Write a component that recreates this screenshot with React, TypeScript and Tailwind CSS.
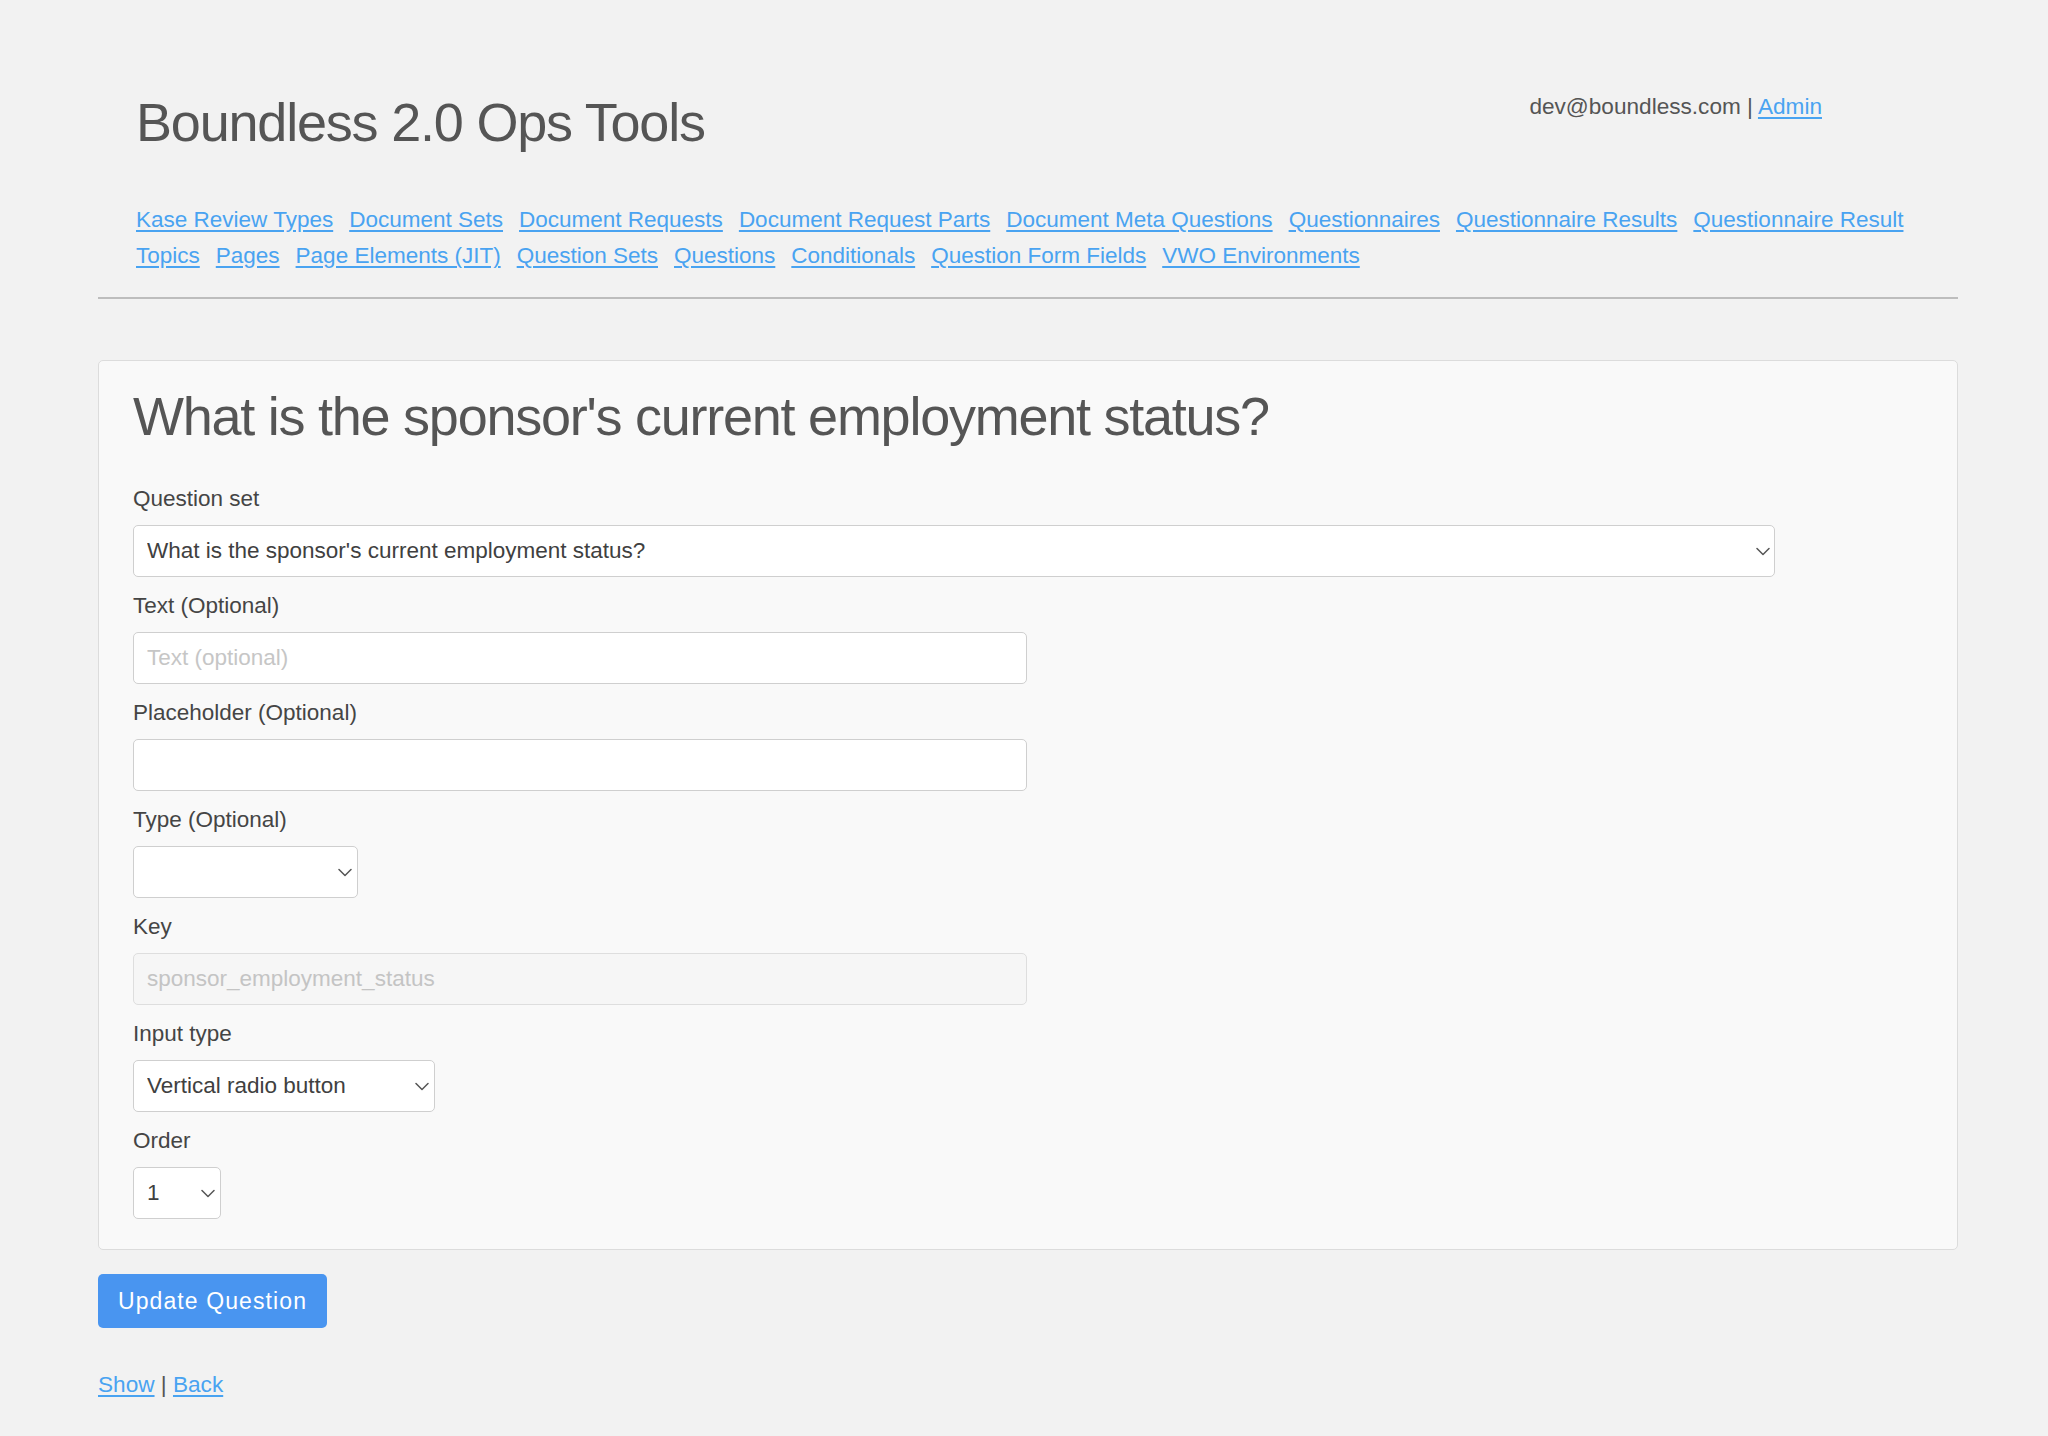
import React from "react";

const navLinks = [
  "Kase Review Types",
  "Document Sets",
  "Document Requests",
  "Document Request Parts",
  "Document Meta Questions",
  "Questionnaires",
  "Questionnaire Results",
  "Questionnaire Result Topics",
  "Pages",
  "Page Elements (JIT)",
  "Question Sets",
  "Questions",
  "Conditionals",
  "Question Form Fields",
  "VWO Environments",
];

function Chevron({ className }: { className?: string }) {
  return (
    <svg
      className={className}
      width="14"
      height="9"
      viewBox="0 0 14 9"
      fill="none"
      stroke="#555"
      strokeWidth="1.5"
      strokeLinecap="round"
      strokeLinejoin="round"
    >
      <path d="M1 1.5 L7 7.5 L13 1.5" />
    </svg>
  );
}

function Label({ children }: { children: React.ReactNode }) {
  return <div className="text-[22.5px] leading-[32px] text-[#454545] mb-[10px]">{children}</div>;
}

function SelectBox({ value, width, chevronRight }: { value: string; width: string; chevronRight: string }) {
  return (
    <div className={`relative h-[52px] ${width} mb-[13px]`}>
      <select
        defaultValue={value}
        className="appearance-none w-full h-full bg-white border border-[#cfcfcf] rounded-[5px] pl-[13px] pr-[30px] text-[22.5px] text-[#404040] outline-none"
        style={{ fontFamily: '"Liberation Sans", Arial, sans-serif' }}
      >
        <option value={value}>{value}</option>
      </select>
      <Chevron className={`absolute top-[22px] ${chevronRight} pointer-events-none`} />
    </div>
  );
}

function TextInput({ placeholder, value, disabled }: { placeholder?: string; value?: string; disabled?: boolean }) {
  return (
    <input
      type="text"
      placeholder={placeholder}
      defaultValue={value}
      disabled={disabled}
      className={`block w-[894px] h-[52px] mb-[13px] rounded-[5px] px-[13px] text-[22.5px] outline-none placeholder:text-[#c6c6c6] ${
        disabled
          ? "bg-[#f6f6f6] border border-[#dedede] text-[#c4c4c4]"
          : "bg-white border border-[#cfcfcf] text-[#404040]"
      }`}
      style={{ fontFamily: '"Liberation Sans", Arial, sans-serif' }}
    />
  );
}

export default function App() {
  return (
    <div
      className="min-h-[1436px] bg-[#f2f2f2] text-[#555] pl-[98px] pr-[90px] pt-[92px] pb-[40px]"
      style={{ fontFamily: '"Liberation Sans", Arial, Helvetica, sans-serif' }}
    >
      {/* Header */}
      <header className="border-b-2 border-[#bdbdbd] px-[38px] pb-[23px]">
        <div className="flex justify-between items-start">
          <h1 className="text-[54px] leading-[60px] tracking-[-1.2px] text-[#555] font-normal">
            Boundless 2.0 Ops Tools
          </h1>
          <div className="text-[22.6px] leading-[30px] text-[#555] mr-[98px]">
            dev@boundless.com |{" "}
            <a href="#" className="text-[#49a3f1] underline underline-offset-[3px]">
              Admin
            </a>
          </div>
        </div>
        <nav className="mt-[50px] text-[22.5px] leading-[36px]">
          {navLinks.map((l) => (
            <a key={l} href="#" className="text-[#49a3f1] underline underline-offset-[3px] mr-[16px]">
              {l}
            </a>
          ))}
        </nav>
      </header>

      {/* Edit form */}
      <section className="mt-[61px] bg-[#f9f9f9] border border-[#dcdcdc] rounded-[5px] pl-[34px] pr-[34px] pt-[25px] pb-[17px]">
        <h2 className="text-[54px] leading-[60px] tracking-[-1.25px] text-[#555] font-normal mb-[37px]">
          What is the sponsor's current employment status?
        </h2>

        <Label>Question set</Label>
        <SelectBox value="What is the sponsor's current employment status?" width="w-[1642px]" chevronRight="right-[5px]" />

        <Label>Text (Optional)</Label>
        <TextInput placeholder="Text (optional)" />

        <Label>Placeholder (Optional)</Label>
        <TextInput />

        <Label>Type (Optional)</Label>
        <SelectBox value="" width="w-[225px]" chevronRight="right-[6px]" />

        <Label>Key</Label>
        <TextInput value="sponsor_employment_status" disabled />

        <Label>Input type</Label>
        <SelectBox value="Vertical radio button" width="w-[302px]" chevronRight="right-[6px]" />

        <Label>Order</Label>
        <SelectBox value="1" width="w-[88px]" chevronRight="right-[6px]" />
      </section>

      <button
        type="button"
        className="mt-[24px] w-[229px] h-[54px] bg-[#4995f0] rounded-[5px] text-white text-[23px] tracking-[1.1px]"
      >
        Update Question
      </button>

      <div className="mt-[42px] text-[22.6px] leading-[30px] text-[#555]">
        <a href="#" className="text-[#49a3f1] underline underline-offset-[3px]">
          Show
        </a>{" "}
        |{" "}
        <a href="#" className="text-[#49a3f1] underline underline-offset-[3px]">
          Back
        </a>
      </div>
    </div>
  );
}
